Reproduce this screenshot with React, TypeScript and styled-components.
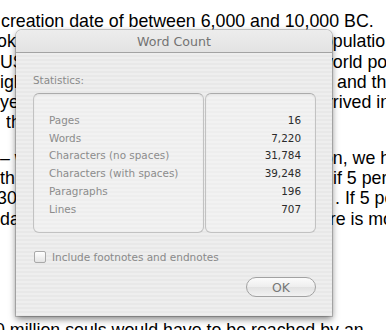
import React from 'react'
import styled, { createGlobalStyle } from 'styled-components'

const GlobalStyle = createGlobalStyle`
  html, body {
    margin: 0;
    padding: 0;
    background: #ffffff;
    overflow: hidden;
  }
`

const Page = styled.div`
  position: relative;
  width: 386px;
  height: 330px;
  overflow: hidden;
  background: #ffffff;
`

const Document = styled.div`
  padding-top: 11px;
  font-family: 'Liberation Sans', Arial, sans-serif;
  font-size: 17.8px;
  line-height: 20.3px;
  color: #000000;
`

const Paragraph = styled.div<{ $gap?: number }>`
  margin-top: ${(p) => p.$gap ?? 0}px;
`

const Line = styled.div<{ $split?: number }>`
  display: grid;
  grid-template-columns: ${(p) => (p.$split ? `${p.$split}px auto` : 'auto')};
  height: 20.3px;
  white-space: pre;
  overflow: hidden;
`

const Head = styled.span<{ $shift?: number }>`
  margin-left: ${(p) => p.$shift ?? 0}px;
  overflow: hidden;
`

const Tail = styled.span`
  overflow: hidden;
`

const Dialog = styled.div`
  position: absolute;
  left: 16px;
  top: 30px;
  width: 316px;
  height: 286px;
  display: flex;
  flex-direction: column;
  border-radius: 6px 6px 0 0;
  box-shadow: 0 0 0 1px rgba(0, 0, 0, 0.18), 0 3px 7px rgba(0, 0, 0, 0.5);
  overflow: hidden;
  font-family: 'DejaVu Sans', 'Lucida Grande', sans-serif;
`

const TitleBar = styled.div`
  height: 22px;
  display: flex;
  align-items: center;
  justify-content: center;
  background: linear-gradient(#ededed, #e3e3e3);
  border-bottom: 1px solid #a3a3a3;
  font-size: 12.6px;
  color: #737373;
`

const Body = styled.div`
  flex: 1;
  display: flex;
  flex-direction: column;
  padding: 21px 16px 19px 17px;
  background: repeating-linear-gradient(
    #eeeeee 0px,
    #eeeeee 2px,
    #e8e8e8 2px,
    #e8e8e8 4px
  );
`

const SectionLabel = styled.div`
  font-size: 10.4px;
  line-height: 13px;
  color: #8a8a8a;
  margin-bottom: 6px;
`

const Panels = styled.div`
  display: flex;
  gap: 1px;
  height: 140px;
`

const Panel = styled.div<{ $width: number; $align: 'left' | 'right' }>`
  box-sizing: border-box;
  width: ${(p) => p.$width}px;
  padding: 18px ${(p) => (p.$align === 'right' ? 14 : 0)}px 14px
    ${(p) => (p.$align === 'left' ? 15 : 0)}px;
  border: 1px solid #c2c2c2;
  border-top-color: #ababab;
  border-radius: 6px;
  background: rgba(255, 255, 255, 0.28);
  box-shadow: inset 0 1px 2px rgba(0, 0, 0, 0.06);
  text-align: ${(p) => p.$align};
`

const Cell = styled.div<{ $value?: boolean }>`
  font-size: 10.4px;
  line-height: 17.7px;
  color: ${(p) => (p.$value ? '#2b2b2b' : '#8c8c8c')};
  white-space: nowrap;
`

const CheckRow = styled.label`
  display: flex;
  align-items: center;
  gap: 6px;
  margin-top: 18px;
  margin-left: 1px;
  font-size: 10.5px;
  color: #8a8a8a;
`

const CheckBox = styled.span`
  box-sizing: border-box;
  width: 12px;
  height: 12px;
  border: 1px solid #a9a9a9;
  border-radius: 2px;
  background: linear-gradient(#ffffff, #e4e4e4);
`

const Footer = styled.div`
  margin-top: auto;
  display: flex;
  justify-content: flex-end;
`

const Button = styled.button`
  box-sizing: border-box;
  width: 70px;
  height: 20px;
  border: 1px solid #a2a2a2;
  border-radius: 10px;
  background: linear-gradient(#fbfbfb 0%, #eeeeee 50%, #e2e2e2 51%, #f2f2f2 100%);
  font-family: 'DejaVu Sans', 'Lucida Grande', sans-serif;
  font-size: 12.4px;
  color: #777777;
  padding: 0;
  display: flex;
  align-items: center;
  justify-content: center;
`

const stats = [
  ['Pages', '16'],
  ['Words', '7,220'],
  ['Characters (no spaces)', '31,784'],
  ['Characters (with spaces)', '39,248'],
  ['Paragraphs', '196'],
  ['Lines', '707'],
]

export default function App() {
  return (
    <>
      <GlobalStyle />
      <Page>
        <Document>
          <Paragraph>
            <Line>
              <Head $shift={1}>creation date of between 6,000 and 10,000 BC.</Head>
            </Line>
            <Line $split={313}>
              <Head $shift={-3}>ok</Head>
              <Tail>population</Tail>
            </Line>
            <Line $split={320}>
              <Head>US</Head>
              <Tail>world population</Tail>
            </Line>
            <Line $split={337}>
              <Head>igh</Head>
              <Tail>and the</Tail>
            </Line>
            <Line $split={317}>
              <Head>ye</Head>
              <Tail>arrived in</Tail>
            </Line>
            <Line>
              <Head $shift={6}>the</Head>
            </Line>
          </Paragraph>
          <Paragraph $gap={15}>
            <Line $split={319}>
              <Head>– w</Head>
              <Tail>ion, we have</Tail>
            </Line>
            <Line $split={333}>
              <Head>th</Head>
              <Tail>if 5 percent</Tail>
            </Line>
            <Line $split={335}>
              <Head $shift={-3}>300</Head>
              <Tail>. If 5 percent</Tail>
            </Line>
            <Line $split={305}>
              <Head>da</Head>
              <Tail>there is more</Tail>
            </Line>
          </Paragraph>
          <Paragraph $gap={91}>
            <Line>
              <Head $shift={-5}>0 million souls would have to be reached by an</Head>
            </Line>
          </Paragraph>
        </Document>

        <Dialog>
          <TitleBar>Word Count</TitleBar>
          <Body>
            <SectionLabel>Statistics:</SectionLabel>
            <Panels>
              <Panel $width={171} $align="left">
                {stats.map(([label]) => (
                  <Cell key={label}>{label}</Cell>
                ))}
              </Panel>
              <Panel $width={111} $align="right">
                {stats.map(([label, value]) => (
                  <Cell key={label} $value>
                    {value}
                  </Cell>
                ))}
              </Panel>
            </Panels>
            <CheckRow>
              <CheckBox />
              Include footnotes and endnotes
            </CheckRow>
            <Footer>
              <Button>OK</Button>
            </Footer>
          </Body>
        </Dialog>
      </Page>
    </>
  )
}
